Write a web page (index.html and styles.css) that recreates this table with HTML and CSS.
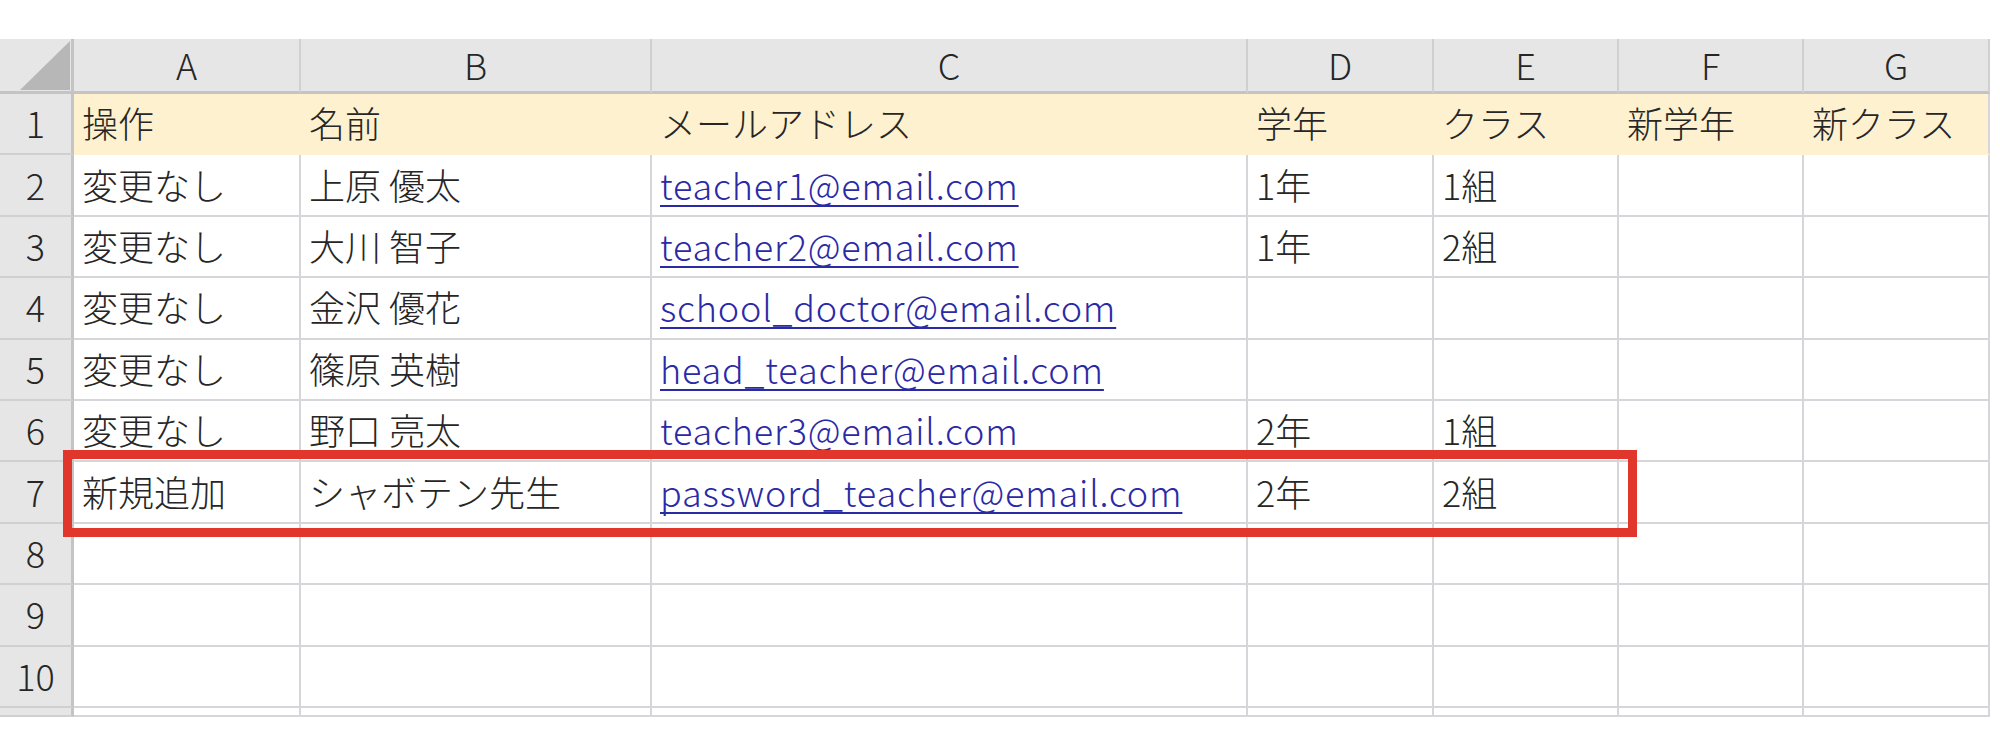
FILE: index.html
```html
<!DOCTYPE html>
<html lang="ja">
<head>
  <meta charset="UTF-8">
  <title>教職員一覧</title>
  <link rel="stylesheet" href="styles.css">
</head>
<body>
  <div class="sheet">
    <div class="corner"></div>
    <div class="col-head">A</div>
    <div class="col-head">B</div>
    <div class="col-head">C</div>
    <div class="col-head">D</div>
    <div class="col-head">E</div>
    <div class="col-head">F</div>
    <div class="col-head">G</div>

    <div class="row-head">1</div>
    <div class="cell title">操作</div>
    <div class="cell title">名前</div>
    <div class="cell title">メールアドレス</div>
    <div class="cell title">学年</div>
    <div class="cell title">クラス</div>
    <div class="cell title">新学年</div>
    <div class="cell title last">新クラス</div>

    <div class="row-head">2</div>
    <div class="cell">変更なし</div>
    <div class="cell">上原 優太</div>
    <div class="cell"><a class="link" href="#">teacher1@email.com</a></div>
    <div class="cell">1年</div>
    <div class="cell">1組</div>
    <div class="cell"></div>
    <div class="cell"></div>

    <div class="row-head">3</div>
    <div class="cell">変更なし</div>
    <div class="cell">大川 智子</div>
    <div class="cell"><a class="link" href="#">teacher2@email.com</a></div>
    <div class="cell">1年</div>
    <div class="cell">2組</div>
    <div class="cell"></div>
    <div class="cell"></div>

    <div class="row-head">4</div>
    <div class="cell">変更なし</div>
    <div class="cell">金沢 優花</div>
    <div class="cell"><a class="link" href="#">school_doctor@email.com</a></div>
    <div class="cell"></div>
    <div class="cell"></div>
    <div class="cell"></div>
    <div class="cell"></div>

    <div class="row-head">5</div>
    <div class="cell">変更なし</div>
    <div class="cell">篠原 英樹</div>
    <div class="cell"><a class="link" href="#">head_teacher@email.com</a></div>
    <div class="cell"></div>
    <div class="cell"></div>
    <div class="cell"></div>
    <div class="cell"></div>

    <div class="row-head">6</div>
    <div class="cell">変更なし</div>
    <div class="cell">野口 亮太</div>
    <div class="cell"><a class="link" href="#">teacher3@email.com</a></div>
    <div class="cell">2年</div>
    <div class="cell">1組</div>
    <div class="cell"></div>
    <div class="cell"></div>

    <div class="row-head">7</div>
    <div class="cell">新規追加</div>
    <div class="cell">シャボテン先生</div>
    <div class="cell"><a class="link" href="#">password_teacher@email.com</a></div>
    <div class="cell">2年</div>
    <div class="cell">2組</div>
    <div class="cell"></div>
    <div class="cell"></div>

    <div class="row-head">8</div>
    <div class="cell"></div><div class="cell"></div><div class="cell"></div><div class="cell"></div>
    <div class="cell"></div><div class="cell"></div><div class="cell"></div>

    <div class="row-head">9</div>
    <div class="cell"></div><div class="cell"></div><div class="cell"></div><div class="cell"></div>
    <div class="cell"></div><div class="cell"></div><div class="cell"></div>

    <div class="row-head">10</div>
    <div class="cell"></div><div class="cell"></div><div class="cell"></div><div class="cell"></div>
    <div class="cell"></div><div class="cell"></div><div class="cell"></div>

    <div class="row-head"></div>
    <div class="cell"></div><div class="cell"></div><div class="cell"></div><div class="cell"></div>
    <div class="cell"></div><div class="cell"></div><div class="cell"></div>

    <!-- 新規追加の行を囲む赤枠 -->
    <div class="highlight"></div>
  </div>
</body>
</html>
```

FILE: styles.css
```css
* {
  box-sizing: border-box;
}

body {
  margin: 0;
  background: #fff;
  color: #262626;
  font-family: "Noto Sans CJK JP", "Noto Sans", sans-serif;
  font-size: 36px;
  font-weight: 300;
}

.sheet {
  position: relative;
  display: grid;
  grid-template-columns: 74px 227px 351px 596px 186px 185px 185px 186px;
  grid-template-rows: 55px repeat(10, 61.4px) 9px;
  width: 1990px;
  margin-top: 39px;
  overflow: hidden;
}

.corner {
  position: relative;
  background: #e6e6e6;
  border-right: 3px solid #c4c4c4;
  border-bottom: 3px solid #c4c4c4;
}

.corner::after {
  content: "";
  position: absolute;
  left: 20px;
  top: 2px;
  width: 50px;
  height: 49px;
  background: #b7b7b7;
  clip-path: polygon(100% 0, 100% 100%, 0 100%);
}

.col-head {
  display: flex;
  align-items: center;
  justify-content: center;
  padding-bottom: 3px;
  background: #e6e6e6;
  border-right: 2px solid #d0d0d0;
  border-bottom: 3px solid #c4c4c4;
}

.row-head {
  display: flex;
  align-items: center;
  justify-content: center;
  padding-bottom: 3px;
  background: #e6e6e6;
  border-right: 3px solid #c4c4c4;
  border-bottom: 2px solid #d0d0d0;
}

.cell {
  display: flex;
  align-items: center;
  padding: 0 0 3px 8px;
  border-right: 2px solid #d6d6da;
  border-bottom: 2px solid #d6d6da;
  white-space: nowrap;
}

.cell.title {
  background: #fdf1cf;
  border-color: #fdf1cf;
}

.cell.title.last {
  border-right-color: #d6d6da;
}

.link {
  color: #2b2aa6;
  letter-spacing: 0.8px;
  text-decoration: underline;
  text-decoration-thickness: 2px;
  text-underline-offset: 5px;
  text-decoration-skip-ink: none;
}

.highlight {
  position: absolute;
  left: 63px;
  top: 411px;
  width: 1574px;
  height: 87px;
  border: 9px solid #e0362c;
}
```
